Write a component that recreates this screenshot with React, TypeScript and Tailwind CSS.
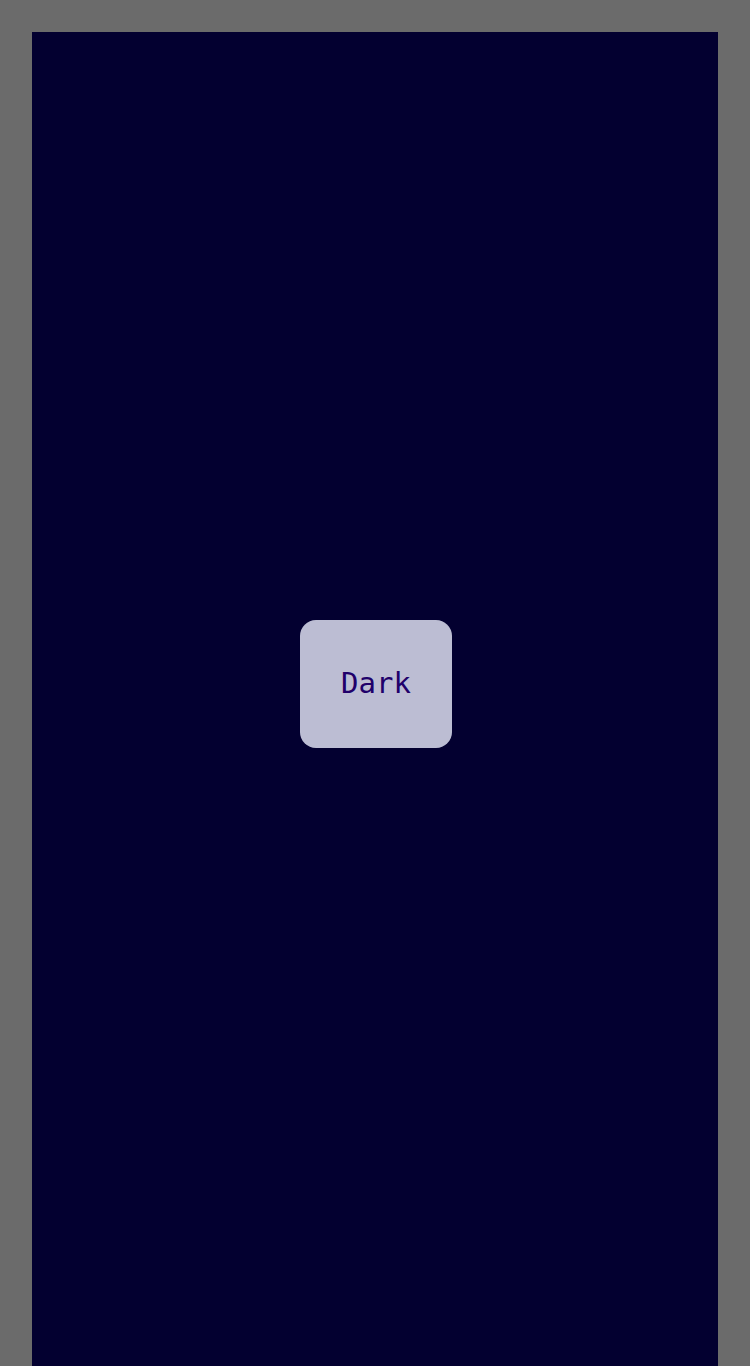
export default function App() {
  return (
    <div className="min-h-screen bg-[#6b6b6b] px-8 pt-8">
      <div className="flex h-[1400px] justify-center bg-[#030030] pl-[2px] pt-[588px]">
        <button className="flex h-[128px] w-[152px] items-center justify-center rounded-2xl bg-[#bcbdd3] text-[29px] text-[#20006a] font-['DejaVu_Sans_Mono',monospace]">
          Dark
        </button>
      </div>
    </div>
  );
}
